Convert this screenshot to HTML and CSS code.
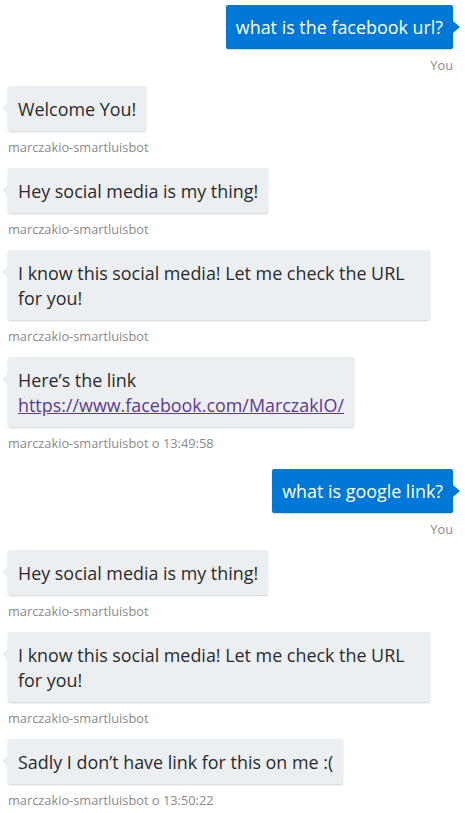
FILE: index.html
```html
<!DOCTYPE html>
<html>
<head>
<meta charset="utf-8">
<link rel="stylesheet" href="styles.css">
</head>
<body>
<div class="chat">
  <div class="msg me">
    <div class="bubble">what is the facebook url?</div>
    <div class="meta">You</div>
  </div>
  <div class="msg bot">
    <div class="bubble">Welcome You!</div>
    <div class="meta">marczakio-smartluisbot</div>
  </div>
  <div class="msg bot">
    <div class="bubble">Hey social media is my thing!</div>
    <div class="meta">marczakio-smartluisbot</div>
  </div>
  <div class="msg bot">
    <div class="bubble">I know this social media! Let me check the URL for you!</div>
    <div class="meta">marczakio-smartluisbot</div>
  </div>
  <div class="msg bot">
    <div class="bubble">Here’s the link<br><a class="link" href="#">https://www.facebook.com/MarczakIO/</a></div>
    <div class="meta">marczakio-smartluisbot o 13:49:58</div>
  </div>
  <div class="msg me">
    <div class="bubble">what is google link?</div>
    <div class="meta">You</div>
  </div>
  <div class="msg bot">
    <div class="bubble">Hey social media is my thing!</div>
    <div class="meta">marczakio-smartluisbot</div>
  </div>
  <div class="msg bot">
    <div class="bubble">I know this social media! Let me check the URL for you!</div>
    <div class="meta">marczakio-smartluisbot</div>
  </div>
  <div class="msg bot">
    <div class="bubble">Sadly I don’t have link for this on me :(</div>
    <div class="meta">marczakio-smartluisbot o 13:50:22</div>
  </div>
</div>
</body>
</html>
```
FILE: styles.css
```css
html, body {
  margin: 0;
  padding: 0;
  background: #ffffff;
}
body {
  font-family: "Open Sans", "Noto Sans", sans-serif;
}
.chat {
  display: flex;
  flex-direction: column;
  padding: 5px 12px 0 8px;
}
.msg {
  display: flex;
  flex-direction: column;
  margin-bottom: 12px;
}
.msg.me {
  align-items: flex-end;
}
.msg.bot {
  align-items: flex-start;
  padding-right: 23px;
}
.msg.bot + .msg.me {
  margin-top: 5px;
}
.bubble {
  position: relative;
  padding: 11px 10px 9px;
  font-size: 17.9px;
  line-height: 25px;
  border-radius: 2px;
}
.me .bubble {
  background: #0078d7;
  color: #ffffff;
  padding: 10px 10px 9px;
  box-shadow: 0 1px 1px rgba(0, 0, 0, 0.15);
}
.bot .bubble {
  background: #eceff1;
  color: #2a2a2a;
  box-shadow: 0 1px 2px rgba(0, 0, 0, 0.18);
}
.bubble::before {
  content: "";
  position: absolute;
  top: 16px;
  width: 0;
  height: 0;
  border-top: 6px solid transparent;
  border-bottom: 6px solid transparent;
}
.me .bubble::before {
  right: -7px;
  border-left: 7px solid #0078d7;
}
.bot .bubble::before {
  left: -6px;
  border-right: 6px solid #eceff1;
}
.link {
  color: #5b3a91;
  text-decoration: underline;
}
.meta {
  margin-top: 8px;
  font-size: 12.8px;
  line-height: 17px;
  color: #8a8a8a;
}
```
